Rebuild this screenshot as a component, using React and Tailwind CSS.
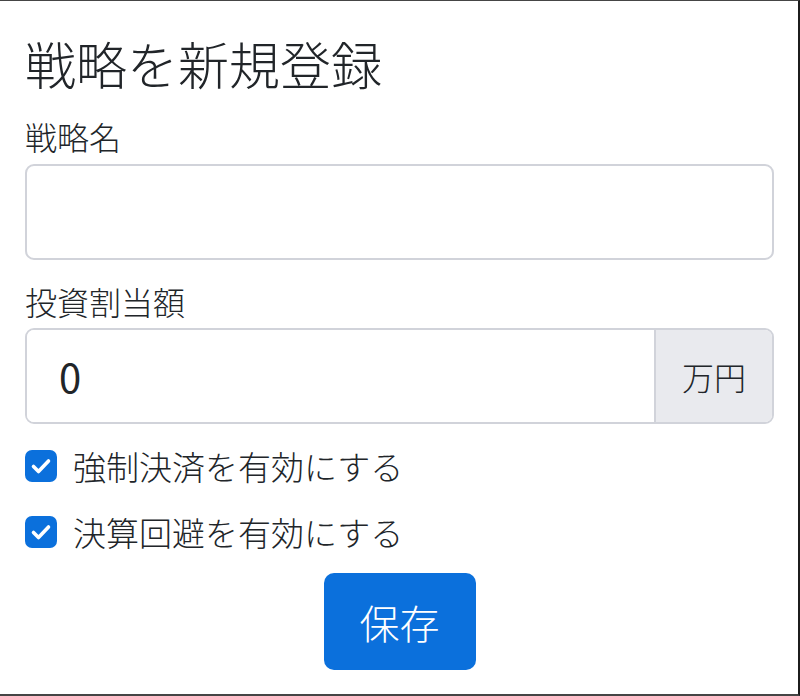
import React from 'react';

const font = { fontFamily: '"Noto Sans CJK JP", "Noto Sans", sans-serif' };

const Check = ({ label }) => (
  <label className="flex items-center gap-[16px] h-[48px]">
    <span className="w-[32px] h-[32px] rounded-[7px] bg-[#0b70dc] flex items-center justify-center">
      <svg width="32" height="32" viewBox="0 0 32 32" fill="none">
        <path d="M8.5 16.5l5 5L23.5 11" stroke="#fff" strokeWidth="3.6" strokeLinecap="round" strokeLinejoin="round" />
      </svg>
    </span>
    <span className="text-[33px] leading-[48px] text-[#212529] font-light">{label}</span>
  </label>
);

export default function App() {
  return (
    <div
      className="w-[800px] h-[696px] bg-white border-t border-t-[#454545] border-r-2 border-r-[#1c1c1c] border-b-2 border-b-[#454545] pl-[25px] pr-[24px] pt-[32px] text-[#212529]"
      style={font}
    >
      <h1 className="text-[51px] leading-[60px] font-light">戦略を新規登録</h1>

      <div className="mt-[19px] text-[32px] leading-[48px] mb-[4px] font-light">戦略名</div>
      <div className="h-[96px] rounded-[9px] border-2 border-[#d1d3da] bg-white" />

      <div className="mt-[17px] text-[32px] leading-[48px] mb-[3px] font-light">投資割当額</div>
      <div className="flex h-[96px] rounded-[9px] border-2 border-[#d1d3da] overflow-hidden">
        <div className="flex-1 flex items-center pl-[32px] text-[40px] bg-white">0</div>
        <div className="w-[118px] flex items-center justify-center border-l-2 border-[#d1d3da] bg-[#e9eaee] text-[32px] font-light">
          万円
        </div>
      </div>

      <div className="mt-[18px] flex flex-col gap-[18px]">
        <Check label="強制決済を有効にする" />
        <Check label="決算回避を有効にする" />
      </div>

      <div className="flex justify-center mt-[17px]">
        <button className="w-[152px] h-[97px] rounded-[10px] bg-[#0b70dc] text-white text-[40px] font-light">
          保存
        </button>
      </div>
    </div>
  );
}
